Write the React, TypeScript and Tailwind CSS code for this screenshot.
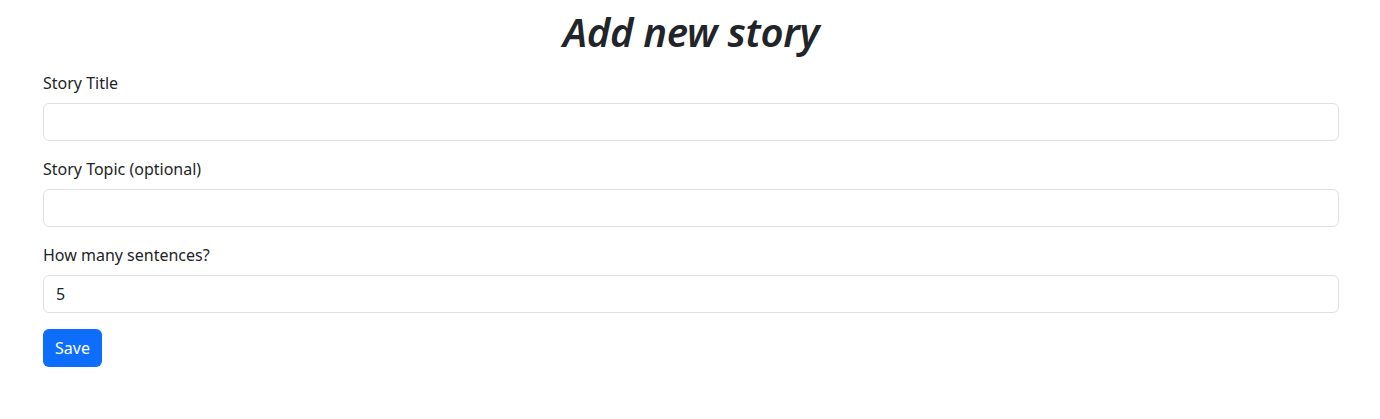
export default function App() {
  return (
    <div
      className="min-h-screen bg-white pt-[8px] pr-[41px] pl-[43px] text-[#212529]"
      style={{ fontFamily: '"Noto Sans", "Open Sans", sans-serif' }}
    >
      <h1 className="mb-[15px] text-center text-[40px] leading-[48px] font-semibold tracking-[-0.3px] italic">
        Add new story
      </h1>
      <form onSubmit={(e) => e.preventDefault()}>
        <div className="mb-4">
          <label className="mb-2 block text-base leading-6">Story Title</label>
          <input
            type="text"
            className="block h-[38px] w-full rounded-md border border-[#dee2e6] px-3 text-base outline-none"
          />
        </div>
        <div className="mb-4">
          <label className="mb-2 block text-base leading-6">Story Topic (optional)</label>
          <input
            type="text"
            className="block h-[38px] w-full rounded-md border border-[#dee2e6] px-3 text-base outline-none"
          />
        </div>
        <div className="mb-4">
          <label className="mb-2 block text-base leading-6">How many sentences?</label>
          <input
            type="text"
            defaultValue="5"
            className="block h-[38px] w-full rounded-md border border-[#dee2e6] px-3 text-base outline-none"
          />
        </div>
        <button
          type="submit"
          className="h-[38px] rounded-md bg-[#0d6efd] px-3 text-base text-white"
        >
          Save
        </button>
      </form>
    </div>
  );
}
